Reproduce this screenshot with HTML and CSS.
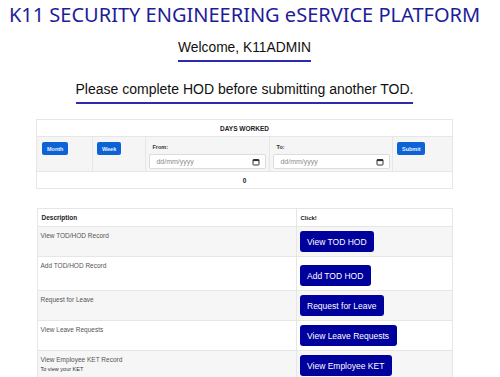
FILE: index.html
```html
<!DOCTYPE html>
<html lang="en">
<head>
  <meta charset="UTF-8" />
  <title>K11 eService Platform</title>
  <link rel="stylesheet" href="styles.css">
</head>
<body>
  <div class="page">
    <h1 class="site-title">K11 SECURITY ENGINEERING eSERVICE PLATFORM</h1>
    <div class="welcome"><span>Welcome, K11ADMIN</span></div>
    <div class="notice"><span>Please complete HOD before submitting another TOD.</span></div>

    <table class="days-table">
      <colgroup>
        <col class="w-month">
        <col class="w-week">
        <col class="w-from">
        <col class="w-to">
        <col class="w-submit">
      </colgroup>
      <tr class="head-row">
        <th colspan="5">DAYS WORKED</th>
      </tr>
      <tr class="filter-row">
        <td><button class="btn-sm">Month</button></td>
        <td><button class="btn-sm">Week</button></td>
        <td>
          <label>From:</label>
          <div class="date-field">
            <span>dd/mm/yyyy</span>
            <svg width="8" height="8" viewBox="0 0 8 8"><rect x="1" y="1.5" width="6" height="5.5" rx="0.6" fill="none" stroke="#333" stroke-width="1"/><rect x="1" y="1.5" width="6" height="1.6" fill="#333"/></svg>
          </div>
        </td>
        <td>
          <label>To:</label>
          <div class="date-field">
            <span>dd/mm/yyyy</span>
            <svg width="8" height="8" viewBox="0 0 8 8"><rect x="1" y="1.5" width="6" height="5.5" rx="0.6" fill="none" stroke="#333" stroke-width="1"/><rect x="1" y="1.5" width="6" height="1.6" fill="#333"/></svg>
          </div>
        </td>
        <td><button class="btn-sm">Submit</button></td>
      </tr>
      <tr class="total-row">
        <td colspan="5">0</td>
      </tr>
    </table>

    <table class="menu-table">
      <colgroup>
        <col class="w-desc">
        <col class="w-click">
      </colgroup>
      <tr class="head-row">
        <th>Description</th>
        <th class="click-head">Click!</th>
      </tr>
      <tr class="odd">
        <td>View TOD/HOD Record</td>
        <td><button class="btn-go">View TOD HOD</button></td>
      </tr>
      <tr>
        <td>Add TOD/HOD Record</td>
        <td><button class="btn-go lower">Add TOD HOD</button></td>
      </tr>
      <tr class="odd">
        <td>Request for Leave</td>
        <td><button class="btn-go">Request for Leave</button></td>
      </tr>
      <tr>
        <td>View Leave Requests</td>
        <td><button class="btn-go">View Leave Requests</button></td>
      </tr>
      <tr class="odd">
        <td>View Employee KET Record<div class="hint">To view your KET</div></td>
        <td><button class="btn-go">View Employee KET</button></td>
      </tr>
    </table>
  </div>
</body>
</html>
```

FILE: styles.css
```css
body {
  margin: 0;
  background: #fff;
  font-family: 'Liberation Sans', Arial, sans-serif;
  color: #333;
}
.page {
  width: 489px;
}
.site-title {
  margin: 0;
  padding-top: 3px;
  text-align: center;
  font-family: 'Noto Sans', 'Open Sans', sans-serif;
  font-weight: 400;
  font-size: 20px;
  line-height: 24px;
  color: #211c97;
  white-space: nowrap;
}
.welcome,
.notice {
  display: flex;
  justify-content: center;
}
.welcome {
  margin-top: 13px;
}
.welcome span {
  font-size: 13.8px;
  line-height: 16px;
  color: #111;
  padding-bottom: 4px;
  border-bottom: 2px solid #2b2bb0;
}
.notice {
  margin-top: 19px;
}
.notice span {
  font-size: 14px;
  line-height: 16px;
  color: #111;
  padding-bottom: 5px;
  border-bottom: 2px solid #2b2bb0;
}
table {
  border-collapse: collapse;
  margin-left: auto;
  margin-right: auto;
  width: 415px;
  table-layout: fixed;
  font-size: 6.5px;
}
td, th {
  border: 1px solid #e6e6e6;
  vertical-align: top;
}
.w-month { width: 56px; }
.w-week { width: 53px; }
.w-from { width: 124px; }
.w-to { width: 123px; }
.w-submit { width: 59px; }
.w-desc { width: 259px; }
.w-click { width: 156px; }

.days-table {
  margin-top: 15px;
}
.days-table .head-row th {
  height: 16px;
  padding: 0;
  vertical-align: middle;
  text-align: center;
  font-weight: 700;
  color: #222;
}
.filter-row td {
  background: #f5f5f5;
  height: 35px;
  padding: 5px 3px 0 4px;
  box-sizing: border-box;
}
.filter-row label {
  display: block;
  font-weight: 700;
  font-size: 5.5px;
  line-height: 7px;
  color: #333;
  padding-left: 2px;
  margin-top: 2px;
  margin-bottom: 3px;
}
.date-field {
  display: flex;
  align-items: center;
  justify-content: space-between;
  width: 117px;
  height: 15px;
  margin-left: -1px;
  box-sizing: border-box;
  background: #fff;
  border: 1px solid #dcdcdc;
  border-radius: 2px;
  padding: 0 5px 0 6px;
  font-size: 7px;
  color: #8a8a8a;
}
.btn-sm {
  display: block;
  border: none;
  border-radius: 2px;
  background: #0d62d6;
  color: #e8f0ff;
  font-family: 'Liberation Sans', Arial, sans-serif;
  font-weight: 700;
  font-size: 5.5px;
  height: 13px;
  padding: 0 4.5px;
}
.filter-row td:first-child .btn-sm {
  margin-left: 1px;
}
.total-row td {
  height: 16px;
  padding: 0;
  vertical-align: middle;
  text-align: center;
  font-weight: 700;
  color: #222;
}
.menu-table {
  margin-top: 19px;
  color: #555;
}
.menu-table .head-row th {
  height: 17px;
  padding: 0 4px;
  vertical-align: middle;
  text-align: left;
  font-weight: 700;
  color: #222;
}
.menu-table .head-row .click-head {
  font-size: 6px;
}
.menu-table td {
  padding: 5px 4px 4px 3px;
}
.menu-table tr.odd td {
  background: #f6f6f6;
}
.hint {
  font-size: 5.5px;
  margin-top: 3px;
  color: #333;
}
.btn-go {
  display: block;
  border: none;
  border-radius: 3px;
  background: #00009c;
  color: #fff;
  font-family: 'Liberation Sans', Arial, sans-serif;
  font-size: 8.5px;
  height: 21px;
  padding: 0 7.5px;
  margin-top: -1px;
}
.btn-go.lower {
  margin-top: 3px;
}
```
